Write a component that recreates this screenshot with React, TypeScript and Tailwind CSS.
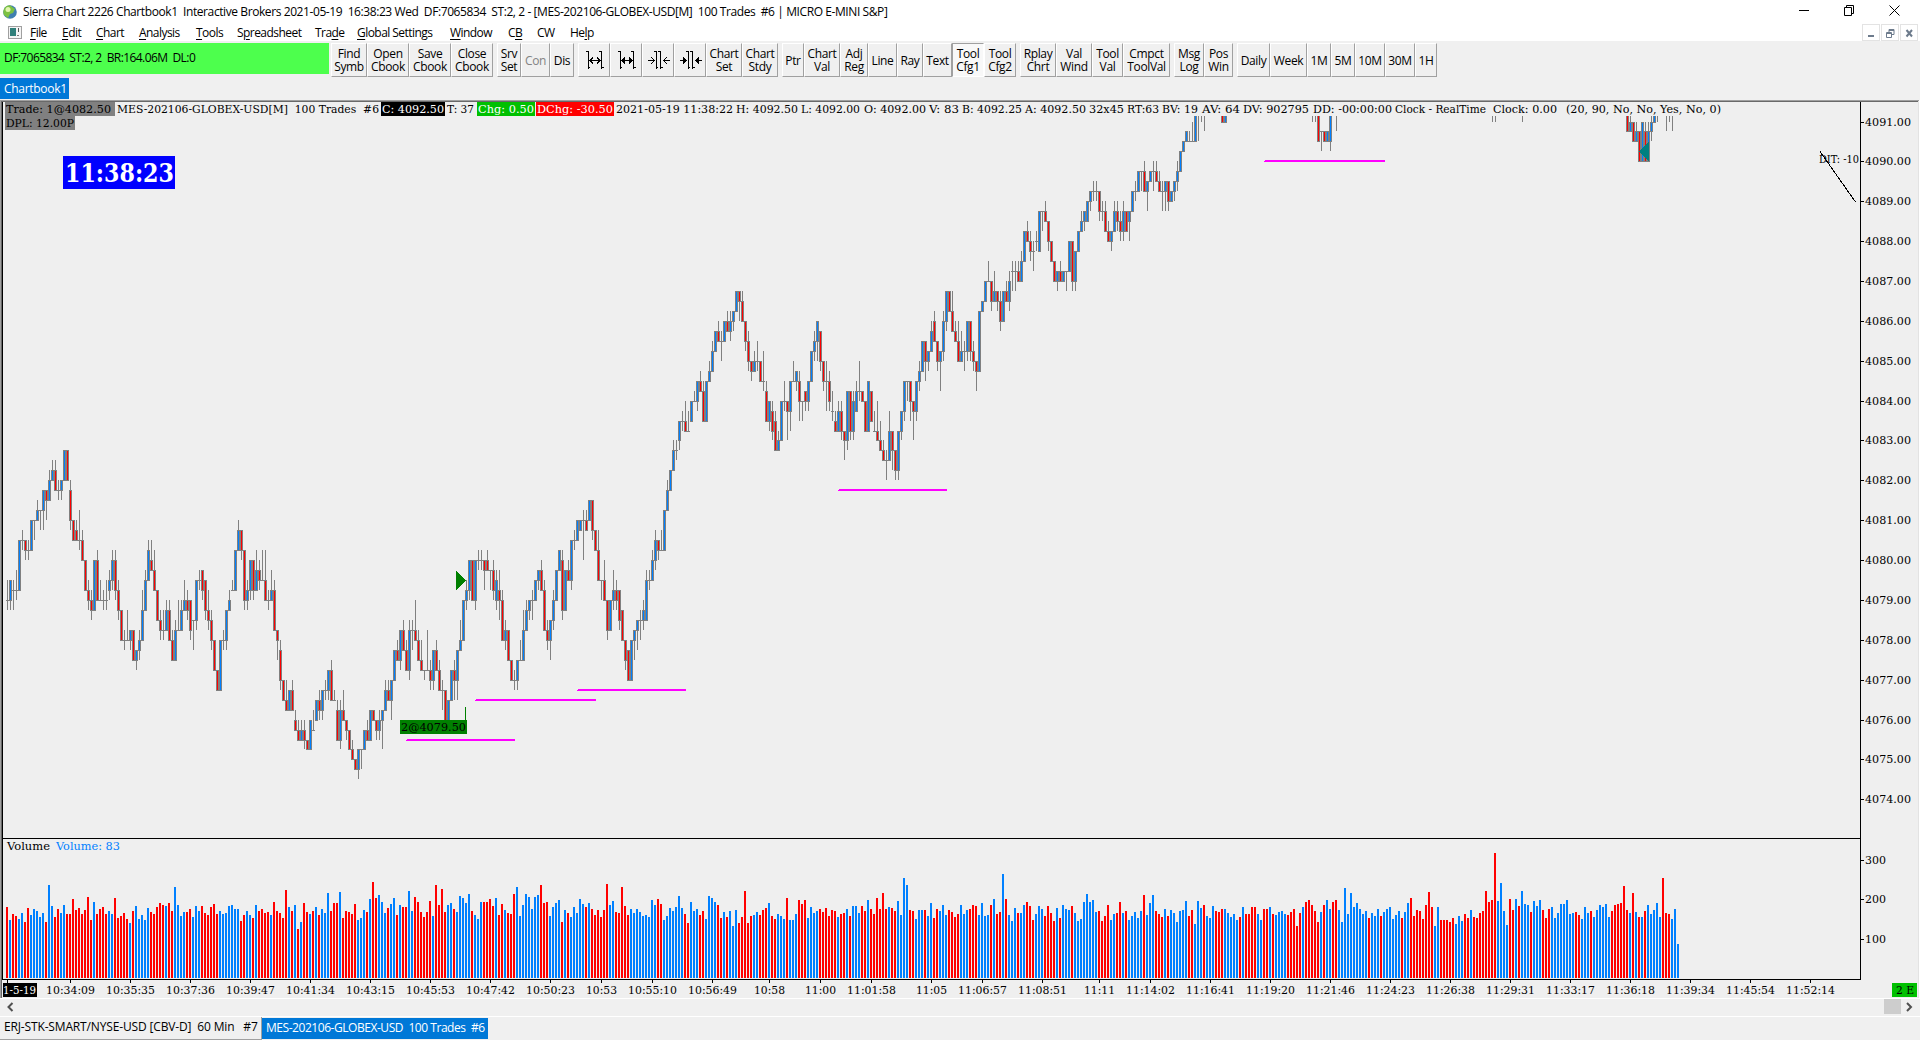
import type { ReactNode } from "react";
import clsx from "clsx";

type Side = "b" | "r";

interface Candle {
  index: number;
  open: number;
  close: number;
  high: number;
  low: number;
}

interface Segment {
  start: number;
  base: number;
  rows: string;
}

interface Label {
  text: string;
  x: number;
  width: number;
}

// Each row is "open close [h<high>] [l<low>]", in quarter-point ticks counted down from the segment's base.
// A row "w<low>" is a bar whose body lies above the visible range.
const segments: Segment[] = [
  {
    start: 0,
    base: 29,
    rows: `15 15 h13 l16|15 13 h13 l16|14 14 h13 l16|14 14 h12 l15|14 9|9 9 h8 l10|9 10 l11|10 10 h9 l11|10 7|7 7 l9
|7 6 h5|6 6 l8|6 4 l8|4 5 l7|5 3 h2|3 2 h1|2 4 h1|4 4 h3 l5|4 3 l5|3 0
|0 3|4 7 h3 l8|7 9|8 9 h7|9 9 h6 l10|9 11 h8|11 14|14 15 h13 l16|15 16 h14 l17|16 11
|11 15 h10|15 15 h13|15 15 h14 l16|15 15 h13 l16|14 13 h12 l15|13 11 h10 l14|11 14 h10 l15|14 16 h13 l17|16 19|19 19 h18 l20
|19 19 h16|19 18 l20|18 21|21 20 l22|20 19 h18 l21|19 16 h14|16 13 h12|13 10 h9|11 12 h9|12 14 h10
|14 17|17 18 h16 l19|18 18 h16 l19|18 16 h15|16 19 h15|19 21 h18|21 18 h17|18 18 h15|18 16 h15|16 15 h13
|15 16 h14 l17|15 18 l19|17 17 l20|17 13 l18|13 13 h12 l14|12 14 l15|13 16 l17|16 17 h14 l18|17 19 h16 l20|19 22
|22 24|24 19|19 19 h18 l20|19 16 l20|16 15 h14|14 14 h13|14 10|10 8 h7|8 10 l11|10 15 l16
|15 14 h13 l16|14 11 l15|11 14 l15|14 12 h10|12 13 h11 l14|13 13 h10|13 15 h10|15 15 h14 l16|15 14 h12|14 18 h13
|18 19 l21|20 23 h19 l24|23 25|25 26 h23|26 24|24 26 h23|27 28 h26|28 29 h27|29 28 h27|28 29 h27 l30
|29 30|30 27|28 28 h26|27 25|25 26 h24 l27|26 24 l27|24 24 h23 l25|24 22 l25|22 25 h21|25 25 h24
|26 29 h25|29 26 h25 l30|26 27 h24|27 28 l29|28 30|30 31 h29|31 32|32 30 l33|30 30 l32|30 28
|28 29 h27|29 26|26 27|27 28 l29|28 27 h26 l29|27 26 l30|26 24 h23|24 25 h23|25 23 l27|23 20
|20 21 h19|21 18 l22|18 20 h17|20 22 h19|22 18 h17 l23|18 18 h17 l20|18 19 h15|19 21 h18|21 22 h19|22 22 l23
|22 22 h18|22 23 h21 l24|23 20 l24|20 22 h19|22 24 h21|24 24 h23 l26|24 27|27 25|25 22|22 23 h21 l25
|23 20 l25|20 19 h17|19 15|15 14 h13 l16|14 11 l15|11 15|15 11 l16|11 11 h10 l12|11 11 h10 l12|11 12 l14
|11 12 h10|12 12 l14|12 14 h11 l15|15 13 h12 l16|14 15 h12 l17|15 19 h14|19 18 h17 l20|18 21|21 23|23 23 h22 l24
|23 21 l24|21 21 h19|21 18 h16|18 16 h15|16 15 l17|15 15 h14 l17|15 13|13 12 l14|12 14 h11|14 18 h13
|18 19 h17 l20|19 17 l21|17 15 h14 l18|15 12|12 10|11 16 h10 l17|16 12|12 13 h11|13 9 l14|9 9 h8 l10
|9 7|8 7|7 7 h6 l11|7 8 h6|7 5|5 8 l9|8 10|10 13 h8|13 13 l15|13 15 h11
|15 18 l19|18 15|15 14 h12 l16|14 15 h13 l16|14 17 l18|16 19|19 21 l22|20 23|23 19|19 18 l21
|18 17 l20|17 17 h16 l19|17 16 h15 l18|17 13 h12|13 13 h12 l14|13 11 h10|11 9 h8 l12|9 10 l11|10 10 h8|10 6
|6 4 h3|4 2`,
  },
  {
    start: 222,
    base: 13,
    rows: `18 16 h15|16 16 h15 l17|15 13 l16|13 13 h12 l14|13 14 h11|14 14 h12|13 11|11 11 h10|11 9 l12|9 10 h8
|10 13 h9|13 9|9 8 h7|8 6 h5|6 4|4 5 h3|5 5 h4 l7|5 3|3 4 h2|4 3 h2 l5
|3 2 l4|2 0|0 1 l3|1 3 h0|3 5 l6|5 7 h4 l8|7 8 l9|8 7 h6|7 7 h5 l8|7 9
|9 9 h6 l10|10 13 h9|13 11 l14|12 14 h11 l15|13 16 h12|16 15 h14|15 11|11 11 h9 l12|11 12 l15|12 9 l14
|9 9 h7|9 8 l10|9 11 h8 l13|11 11 l13|10 11 l12|11 9 l12|9 6|6 5 h4 l7|5 3 l7|4 7 l8
|7 9 l10|9 9 h7 l12|9 11 h8 l12|12 12 h10 l13|13 14 h12|14 12 h11|12 14 h11 l15|14 15 l17|15 10 l16|10 14 l15
|14 11 h10 l15|12 10 h9|10 10 h7 l11|10 11|11 14|14 9|10 13|14 14 h12|14 15 h11|15 16 h13
|16 17 h15|17 17 h16 l19|17 14 h12|14 16 l18|16 18 l19|18 14 l19|14 12 l15|12 9 l13|9 9 l11|9 11 l13
|11 12 l15|12 9 l13|9 8 h7 l10|8 5|5 7 l9|7 6 l8|6 4 h3|3 5 h2|5 7 l8|7 6 l10
|6 3 h2 l7|3 0 l4|0 2|2 4 h0|4 5 h3|5 7 h3|7 6 h4|6 6 h5 l8|6 3 l7|3 6 l7
|6 7 h5 l8|7 8 l10|8 2|2 1`,
  },
  {
    start: 326,
    base: -3,
    rows: `17 15|15 15 h13|15 17 l18|17 16 h14|16 17 l18|17 19 h16 l20|19 16|16 17 h15|17 15 h14 l18|14 14 h13 l16
|14 14 h13 l16|14 15 h13|15 13 h12|13 10|10 11 h9|11 12 h10 l13|12 12 h11 l14|11 11 h10 l12|12 8|8 8 l10
|8 9 h7|9 11 l12|11 13|13 15|15 14 l16|14 15 h13|15 14|14 14 l16|14 11|11 15 l16
|15 12 l16|12 10|10 9 h8|9 8 l10|9 7|7 6 l8|6 6 h5 l7|6 6 h5 l7|6 8 l9|8 8 h7 l9
|8 10 h7|10 11 h9|11 10 l12|10 8 h7|8 9 h7 l10|9 10 h8 l11|10 8 h7 l11|8 10|9 8 l11|8 6
|6 6 h5 l7|6 4|4 4 l6|4 6 h3|6 5 l8|5 4|4 4 h3 l6|4 5 h3|5 6 h4|6 6 h5 l8
|6 5 l8|5 7 l8|7 6|6 5 l7|5 4 h3 l6|4 2|2 1|1 0|1 1 h0|1 1 h-1|1 -3|w1|w-1|w0`,
  },
  { start: 405, base: -3, rows: "-4 -1|-1 -4" },
  { start: 435, base: -3, rows: "w-1|w-1|-4 1|0 0 l2|0 1|1 0|1 -4 l2" },
  { start: 443, base: -3, rows: "w0" },
  { start: 495, base: -3, rows: "w-1|w-1" },
  { start: 505, base: -3, rows: "w-1" },
  { start: 540, base: -3, rows: "-5 0|0 -1 h-4|-1 1|1 0 h-1|0 3|3 -1|0 3 h-1|3 0 h-1|0 -1 h-3 l1|-1 -4|w-1" },
  { start: 553, base: -3, rows: "w0|w-1|w0" },
];

// Side and pixel height of each volume bar.
const volumeRows = `r71 b58 r64 r62 b59 b65 r56 r70 b63 b69 b67 b61 b65 r56 b93 b72 r61 r69 b65 b73
r64 r64 r79 r68 r70 r64 r68 r81 r58 b76 r64 r69 r71 r64 b67 b64 r80 r60 r62 r65
r59 b55 r67 b72 b59 b63 b58 b70 r66 r64 r71 r75 r73 b72 r75 r67 b91 b73 b62 b66
r66 r69 b61 b72 b67 r72 r65 r63 r71 r74 r64 b67 b64 b65 b72 b73 b69 b69 r57 r63
b67 b63 r60 b73 r67 r69 r65 r66 b63 r76 r67 r65 r60 r88 b71 r67 b73 r49 b56 r75
r66 b64 r67 b71 r63 b69 b65 b85 r67 r75 r75 b86 r60 r67 r66 r64 r74 b58 b60 b68
r66 b79 r96 r80 b83 b76 b65 r70 b74 b80 r63 b73 r71 r71 b87 b67 r81 r76 r66 r61
r66 r77 b62 r93 r73 r89 r66 b73 b75 r69 b66 b82 b80 b75 b84 r67 b63 b59 b76 r76
r76 r79 r72 b80 r63 r74 b68 r65 r64 r84 b91 b62 b73 b84 b81 b69 b81 b83 r93 r75
r76 b62 b71 b75 b78 r56 b68 r65 b61 b71 b65 b79 b74 r71 b75 r69 r63 r68 r61 r68
r94 b73 b77 r66 r65 r91 r72 r63 b69 b65 b69 b66 b62 b63 b61 b78 b73 r79 r74 b58
b62 b70 b67 b71 b82 b70 r64 r55 b76 b67 b69 r63 r67 b59 b82 b80 b76 r73 r60 b66
r61 b67 b52 b68 r55 r61 r87 r55 r62 b63 b66 r63 r68 r70 b75 r62 r59 b64 b62 b59
r80 b58 b58 b64 r78 r74 r78 b60 b71 b65 b67 r69 r66 r70 r62 r68 r67 b61 r64 r65
b69 r62 b72 b72 b65 r72 r67 b78 r69 r64 r80 r69 r85 r69 b71 r70 r67 b77 b63 b100
b93 r68 r67 b59 b68 b68 r68 b62 b75 r60 r69 b67 b73 b63 r68 r66 r61 r64 b73 b64
b68 r69 r73 r72 b63 b75 b62 b63 r73 b79 r64 r66 b104 r79 b63 b57 b70 r65 b65 b73
r76 r72 r58 b64 b72 b69 r62 r72 r65 r57 b70 r60 b73 b69 b68 r72 b65 b57 b59 b76
b84 b76 b78 b66 r67 r57 r62 r73 b58 b64 r65 r76 b65 r67 b58 b62 b66 b60 b67 r83
b63 b75 b83 r67 r64 r61 b69 r62 b68 b65 b56 b67 b68 b77 r62 r68 b54 b77 b70 r73
b62 b60 b72 r67 r66 r69 b69 b65 b61 b64 b58 r61 b71 r64 r64 r71 r71 b64 b58 r69
r69 b71 r64 b63 b66 b67 b64 r63 r66 r69 r52 r65 b71 r76 r78 r73 r67 r56 b66 r73
b78 b69 r76 r78 b68 b56 b90 b64 b85 b71 b75 b69 b64 b67 r60 b65 b62 b69 r62 b66
b69 b71 b59 b63 b67 r60 b66 b75 r80 r62 r68 r67 r59 r73 r86 r71 b52 b71 r58 r58
r58 r56 r60 b54 b62 b57 r64 r60 b68 r61 r60 r65 r67 r87 r76 r78 r125 b77 b95 b67
b53 r79 r68 b79 r72 b87 b74 b73 r66 b77 b72 b78 r68 r60 r69 b71 b60 b65 b74 b74
b78 b64 b65 r66 r63 b59 b71 b65 r67 b61 b68 b73 b71 b74 b61 r67 r73 r74 r75 r92
r68 b65 r85 b66 r61 b61 r67 b73 b64 b68 b75 b61 r100 r65 r64 b59 b69 b34`;

const CHART_TOP = 102;
const PLOT_TOP = 116;
const OFFSCREEN_TICK = -8;

const barX = (index: number) => 7 + index * 3;
// Tick 0 is 4090.00.
const tickY = (tick: number) => 161 + Math.floor(0.875 + 9.968 * tick);

function parseSegment({ start, base, rows }: Segment): Candle[] {
  return rows.split("|").map((row, offset) => {
    const parts = row.trim().split(" ");
    const index = start + offset;
    if (parts[0].startsWith("w")) {
      return { index, open: OFFSCREEN_TICK, close: OFFSCREEN_TICK, high: OFFSCREEN_TICK, low: base + Number(parts[0].slice(1)) };
    }
    const open = base + Number(parts[0]);
    const close = base + Number(parts[1]);
    const high = parts.find((part) => part.startsWith("h"));
    const low = parts.find((part) => part.startsWith("l"));
    return {
      index,
      open,
      close,
      high: high ? base + Number(high.slice(1)) : Math.min(open, close),
      low: low ? base + Number(low.slice(1)) : Math.max(open, close),
    };
  });
}

const candles = segments.flatMap(parseSegment);
const volumes = volumeRows.split(/\s+/).map((item) => ({ side: item[0] as Side, height: Number(item.slice(1)) }));

const headerLabels: Label[] = [
  { text: "MES-202106-GLOBEX-USD[M]  100 Trades  #6", x: 117, width: 262 },
  { text: "T: 37", x: 447, width: 27 },
  { text: "2021-05-19 11:38:22", x: 616, width: 117 },
  { text: "H: 4092.50", x: 736, width: 62 },
  { text: "L: 4092.00", x: 801, width: 59 },
  { text: "O: 4092.00", x: 864, width: 62 },
  { text: "V: 83", x: 929, width: 30 },
  { text: "B: 4092.25", x: 962, width: 60 },
  { text: "A: 4092.50", x: 1025, width: 61 },
  { text: "32x45", x: 1089, width: 35 },
  { text: "RT:63", x: 1127, width: 32 },
  { text: "BV: 19", x: 1162, width: 36 },
  { text: "AV: 64", x: 1202, width: 38 },
  { text: "DV: 902795", x: 1243, width: 66 },
  { text: "DD: -00:00:00", x: 1313, width: 79 },
  { text: "Clock - RealTime", x: 1395, width: 91 },
  { text: "Clock: 0.00", x: 1493, width: 64 },
  { text: "(20, 90, No, No, Yes, No, 0)", x: 1566, width: 155 },
];

const timeLabels: [number, string][] = [
  [70, "10:34:09"],
  [130, "10:35:35"],
  [190, "10:37:36"],
  [250, "10:39:47"],
  [310, "10:41:34"],
  [370, "10:43:15"],
  [430, "10:45:53"],
  [490, "10:47:42"],
  [550, "10:50:23"],
  [601, "10:53"],
  [652, "10:55:10"],
  [712, "10:56:49"],
  [769, "10:58"],
  [820, "11:00"],
  [871, "11:01:58"],
  [931, "11:05"],
  [982, "11:06:57"],
  [1042, "11:08:51"],
  [1099, "11:11"],
  [1150, "11:14:02"],
  [1210, "11:16:41"],
  [1270, "11:19:20"],
  [1330, "11:21:46"],
  [1390, "11:24:23"],
  [1450, "11:26:38"],
  [1510, "11:29:31"],
  [1570, "11:33:17"],
  [1630, "11:36:18"],
  [1690, "11:39:34"],
  [1750, "11:45:54"],
  [1810, "11:52:14"],
];

const prices = Array.from({ length: 18 }, (_, i) => 4091 - i);
const supportLines = [
  { x: 406, y: 739, width: 109 },
  { x: 475, y: 699, width: 121 },
  { x: 577, y: 689, width: 109 },
  { x: 838, y: 489, width: 109 },
  { x: 1264, y: 160, width: 121 },
];

const menus: [string, string, string][] = [
  ["", "F", "ile"],
  ["", "E", "dit"],
  ["", "C", "hart"],
  ["", "A", "nalysis"],
  ["", "T", "ools"],
  ["S", "p", "readsheet"],
  ["Tra", "d", "e"],
  ["", "G", "lobal Settings"],
  ["", "W", "indow"],
  ["C", "B", ""],
  ["CW", "", ""],
  ["He", "l", "p"],
];
const menuWidths = ["w-8", "w-[34px]", "w-[43px]", "w-[57px]", "w-[41px]", "w-[78px]", "w-[42px]", "w-[93px]", "w-[58px]", "w-[29px]", "w-[33px]", "w-[30px]"];

function ChartText({ text, x, y, width, fill = "#000", bold = false, size = 11 }: Label & { y: number; fill?: string; bold?: boolean; size?: number }) {
  return (
    <text
      x={x}
      y={y}
      fill={fill}
      fontSize={size}
      fontWeight={bold ? 700 : 400}
      textLength={width}
      lengthAdjust="spacingAndGlyphs"
      className="whitespace-pre font-['DejaVu_Serif','Liberation_Serif',serif]"
    >
      {text}
    </text>
  );
}

function Candles() {
  return (
    <g clipPath="url(#plot)" shapeRendering="crispEdges">
      {candles.map(({ index, open, close, high, low }) => {
        const x = barX(index);
        const top = tickY(Math.min(open, close));
        const bottom = tickY(Math.max(open, close));
        const wickTop = tickY(high);
        return (
          <g key={index}>
            <rect x={x} y={wickTop} width={1} height={Math.max(tickY(low) - wickTop, 1)} fill="#808080" />
            <rect x={x - 1} y={top} width={3} height={bottom - top + 1} fill="#808080" />
            {bottom > top && <rect x={x} y={top + 1} width={1} height={bottom - top - 1} fill={close < open ? "#0080ff" : "#ff0000"} />}
          </g>
        );
      })}
    </g>
  );
}

function Chart() {
  return (
    <svg width={1920} height={898} viewBox="0 100 1920 898" className="block">
      <clipPath id="plot">
        <rect x={3} y={PLOT_TOP} width={1857} height={720} />
      </clipPath>
      <g shapeRendering="crispEdges">
        <rect x={0} y={100} width={1920} height={898} fill="#efefef" />
        <rect x={0} y={100} width={1920} height={1} fill="#a0a0a0" />
        <rect x={0} y={101} width={1920} height={1} fill="#696969" />
        <rect x={0} y={100} width={1} height={898} fill="#a0a0a0" />
        <rect x={1} y={101} width={1} height={897} fill="#696969" />
        <rect x={2} y={CHART_TOP} width={1} height={878} fill="#000" />
        <rect x={1860} y={CHART_TOP} width={1} height={878} fill="#000" />
        <rect x={2} y={838} width={1859} height={1} fill="#000" />
        <rect x={2} y={979} width={1859} height={1} fill="#000" />
        <rect x={1918} y={101} width={1} height={897} fill="#e3e3e3" />
        <rect x={1919} y={100} width={1} height={898} fill="#fff" />
      </g>

      <Candles />

      <g shapeRendering="crispEdges">
        {volumes.map(({ side, height }, index) => (
          <rect key={index} x={barX(index) - 1} y={978 - height} width={2} height={height} fill={side === "b" ? "#0080ff" : "#ff0000"} />
        ))}
        {supportLines.map(({ x, y, width }) => (
          <g key={x} fill="#ff00ff">
            <rect x={x + 1} y={y} width={width - 1} height={1} />
            <rect x={x} y={y + 1} width={width} height={1} />
          </g>
        ))}
      </g>

      <path d="M456 571V590L466.500 580.500Z" fill="#008000" shapeRendering="crispEdges" />
      <path d="M1649 142V162L1639 151.500Z" fill="#008080" shapeRendering="crispEdges" />
      <rect x={465} y={707} width={1} height={14} fill="#008000" />
      <rect x={400} y={720} width={67} height={14} fill="#008000" />
      <ChartText text="2@4079.50" x={401} y={731} width={65} />

      <rect x={5} y={102} width={110} height={14} fill="#808080" />
      <rect x={5} y={116} width={70} height={14} fill="#808080" />
      <rect x={381} y={102} width={64} height={14} fill="#000" />
      <rect x={477} y={102} width={58} height={14} fill="#00c000" />
      <rect x={536} y={102} width={78} height={14} fill="#f00" />
      <ChartText text="Trade: 1@4082.50" x={6} y={113} width={105} />
      <ChartText text="DPL: 12.00P" x={6} y={127} width={68} />
      <ChartText text="C: 4092.50" x={382} y={113} width={62} fill="#fff" />
      <ChartText text="Chg: 0.50" x={478} y={113} width={56} fill="#fff" />
      <ChartText text="DChg: -30.50" x={537} y={113} width={76} fill="#fff" />
      {headerLabels.map((label) => (
        <ChartText key={label.text} {...label} y={113} />
      ))}

      <rect x={63} y={156} width={112} height={33} fill="#00f" />
      <ChartText text="11:38:23" x={65} y={182} width={109} fill="#fff" size={26} bold />

      <ChartText text="DIT: -10" x={1819} y={163} width={40} />
      <path d="M1820 151.500L1855.500 202" stroke="#000" fill="none" shapeRendering="crispEdges" />

      {prices.map((price) => {
        const y = tickY((4090 - price) * 4);
        return (
          <g key={price}>
            <rect x={1861} y={y} width={3} height={1} fill="#000" />
            <ChartText text={price.toFixed(2)} x={1865} y={y + 4} width={46} />
          </g>
        );
      })}
      {[300, 200, 100].map((level, i) => (
        <g key={level}>
          <rect x={1861} y={[860, 899, 939][i]} width={3} height={1} fill="#000" />
          <ChartText text={String(level)} x={1865} y={[864, 903, 943][i]} width={21} />
        </g>
      ))}

      <ChartText text="Volume" x={7} y={850} width={43} />
      <ChartText text="Volume: 83" x={56} y={850} width={64} fill="#0080ff" />

      <rect x={7} y={980} width={1} height={3} fill="#000" />
      <rect x={3} y={983} width={34} height={14} fill="#000" />
      <ChartText text="1-5-19" x={3} y={994} width={33} fill="#fff" />
      {timeLabels.map(([x, text]) => {
        const width = text.length === 5 ? 31 : 49;
        return (
          <g key={x}>
            <rect x={x} y={980} width={1} height={3} fill="#000" />
            <ChartText text={text} x={x - (width - 1) / 2} y={994} width={width} />
          </g>
        );
      })}
      <rect x={1892} y={983} width={25} height={14} fill="#00c000" />
      <ChartText text="2 E" x={1896} y={994} width={18} />
    </svg>
  );
}

function ToolButton({ width, active = false, disabled = false, children }: { width: string; active?: boolean; disabled?: boolean; children: ReactNode }) {
  return (
    <button
      type="button"
      className={clsx(
        "flex h-[34px] shrink-0 items-center justify-center whitespace-pre border text-center text-[12px] leading-[13px] tracking-[-0.35px]",
        active ? "border-b-white border-l-[#a0a0a0] border-r-white border-t-[#a0a0a0] bg-[#f8f8f8]" : "border-b-[#a0a0a0] border-l-white border-r-[#a0a0a0] border-t-white",
        disabled && "text-[#838383]",
        width
      )}
    >
      {children}
    </button>
  );
}

function SpacingIcon({ inward = false, bold = false }: { inward?: boolean; bold?: boolean }) {
  const left = inward ? 8 : 4;
  const right = inward ? 13 : 18;
  return (
    <svg width={22} height={20} viewBox="0 0 22 20" fill="none" stroke="#000" shapeRendering="crispEdges" className="ml-px">
      <path d={`M${left + 0.5} 1V19M${left - 2} 1.500H${left}M${left + 1} 17.500H${left + 2}M${right - 0.5} 1V19M${right - 3} 1.500H${right - 1}M${right} 17.500H${right + 2}`} />
      {inward ? (
        <g>
          <path d="M0 10.500H6M16 10.500H22" />
          <path d="M3 7L6.500 10.500L3 14M19 7L15.500 10.500L19 14" fill={bold ? "#000" : "none"} />
        </g>
      ) : (
        <g>
          <path d="M6 10.500H16" />
          <path d="M9 7.500L6 10.500L9 13.500M13 7.500L16 10.500L13 13.500" fill={bold ? "#000" : "none"} />
        </g>
      )}
    </svg>
  );
}

function Toolbar() {
  return (
    <div className="flex h-9 items-start bg-[#f0f0f0] pt-[2px]">
      <div className="mr-[2px] flex h-[31px] w-[329px] items-center whitespace-pre bg-[#4dff4d] pb-px pl-1 text-[12px] tracking-[-0.58px]">DF:7065834  ST:2, 2  BR:164.06M  DL:0</div>
      <ToolButton width="w-9">{"Find\nSymb"}</ToolButton>
      <ToolButton width="w-[42px]">{"Open\nCbook"}</ToolButton>
      <ToolButton width="w-[42px]">{"Save\nCbook"}</ToolButton>
      <ToolButton width="w-[42px]">{"Close\nCbook"}</ToolButton>
      <div className="ml-1 flex">
        <ToolButton width="w-6">{"Srv\nSet"}</ToolButton>
        <ToolButton width="w-[29px]" disabled>Con</ToolButton>
        <ToolButton width="w-6">Dis</ToolButton>
      </div>
      <div className="ml-1 flex">
        <ToolButton width="w-8"><SpacingIcon /></ToolButton>
        <ToolButton width="w-8"><SpacingIcon bold /></ToolButton>
        <ToolButton width="w-8"><SpacingIcon inward /></ToolButton>
        <ToolButton width="w-8"><SpacingIcon inward bold /></ToolButton>
        <ToolButton width="w-9">{"Chart\nSet"}</ToolButton>
        <ToolButton width="w-9">{"Chart\nStdy"}</ToolButton>
      </div>
      <div className="ml-1 flex">
        <ToolButton width="w-[22px]">Ptr</ToolButton>
        <ToolButton width="w-9">{"Chart\nVal"}</ToolButton>
        <ToolButton width="w-7">{"Adj\nReg"}</ToolButton>
        <ToolButton width="w-[29px]">Line</ToolButton>
        <ToolButton width="w-[26px]">Ray</ToolButton>
        <ToolButton width="w-[29px]">Text</ToolButton>
        <ToolButton width="w-8" active>{"Tool\nCfg1"}</ToolButton>
        <ToolButton width="w-8">{"Tool\nCfg2"}</ToolButton>
      </div>
      <div className="ml-1 flex">
        <ToolButton width="w-9">{"Rplay\nChrt"}</ToolButton>
        <ToolButton width="w-9">{"Val\nWind"}</ToolButton>
        <ToolButton width="w-[31px]">{"Tool\nVal"}</ToolButton>
        <ToolButton width="w-[47px]">{"Cmpct\nToolVal"}</ToolButton>
      </div>
      <div className="ml-1 flex">
        <ToolButton width="w-[30px]">{"Msg\nLog"}</ToolButton>
        <ToolButton width="w-[29px]">{"Pos\nWin"}</ToolButton>
      </div>
      <div className="ml-1 flex">
        <ToolButton width="w-[33px]">Daily</ToolButton>
        <ToolButton width="w-[37px]">Week</ToolButton>
        <ToolButton width="w-6">1M</ToolButton>
        <ToolButton width="w-6">5M</ToolButton>
        <ToolButton width="w-[30px]">10M</ToolButton>
        <ToolButton width="w-[30px]">30M</ToolButton>
        <ToolButton width="w-[22px]">1H</ToolButton>
      </div>
    </div>
  );
}

function TitleBar() {
  return (
    <div className="flex h-6 items-center bg-white pl-[3px]">
      <svg width={14} height={14} viewBox="0 0 14 14">
        <circle cx={7} cy={7} r={6.800} fill="#3f7fb0" />
        <path d="M7 .2A6.800 6.800 0 0 0 1 10L5 13 7 9 10 8 12 4Z" fill="#7cc142" />
        <circle cx={5} cy={4.500} r={2.500} fill="#e2f5b0" />
      </svg>
      <div className="ml-[6px] whitespace-pre text-[12px] tracking-[-0.41px]">Sierra Chart 2226 Chartbook1  Interactive Brokers 2021-05-19  16:38:23 Wed  DF:7065834  ST:2, 2 - [MES-202106-GLOBEX-USD[M]  100 Trades  #6 | MICRO E-MINI S&amp;P]</div>
      <svg width={102} height={12} viewBox="0 0 102 12" fill="none" stroke="#000" className="mr-[19px] mb-1 ml-auto">
        <path d="M0 6.500H10M45.500 3.500H52.500V11.500H45.500ZM47.500 3V1.500H54.500V9.500H53M90.500 1.500L100.500 11.500M100.500 1.500L90.500 11.500" />
      </svg>
    </div>
  );
}

function MdiButton({ children }: { children: ReactNode }) {
  return (
    <div className="flex h-[17px] w-[18px] items-center justify-center border border-[#e3e3e3]">
      <svg width={10} height={10} viewBox="0 0 10 10" fill="none" stroke="#6d7b8c">
        {children}
      </svg>
    </div>
  );
}

function MenuBar() {
  return (
    <div className="flex h-[17px] items-center bg-white pl-2">
      <svg width={14} height={13} viewBox="0 0 14 13" className="mr-2 shrink-0" shapeRendering="crispEdges">
        <rect x={0.500} y={0.500} width={13} height={12} fill="#f4f4f4" stroke="#a0a0a0" />
        <rect x={2} y={2} width={6} height={8} fill="#2f7f7a" />
        <rect x={10} y={2} width={1} height={4} fill="#555" />
        <rect x={9} y={9} width={2} height={1} fill="#777" />
      </svg>
      {menus.map(([before, key, after], i) => (
        <div key={before + key + after} className={clsx("shrink-0 whitespace-pre text-[12px] tracking-[-0.55px]", menuWidths[i])}>
          {before}
          <span className="underline underline-offset-2">{key}</span>
          {after}
        </div>
      ))}
      <div className="mr-[2px] ml-auto flex gap-px">
        <MdiButton>
          <path d="M2 8H8" strokeWidth={2} />
        </MdiButton>
        <MdiButton>
          <path d="M1.500 4.500H6.500V9.500H1.500ZM1 5.500H7M4 4V1.500H9V6.500H7M4 2.500H9" />
        </MdiButton>
        <MdiButton>
          <path d="M2.500 2L8 8.500M8 2L2.500 8.500" strokeWidth={2} />
        </MdiButton>
      </div>
    </div>
  );
}

export default function App() {
  return (
    <div className="flex h-[1040px] w-[1920px] flex-col overflow-hidden bg-[#f0f0f0] font-['Open_Sans','Noto_Sans',sans-serif] text-black">
      <TitleBar />
      <MenuBar />
      <Toolbar />
      <div className="flex h-[23px] items-start pt-px">
        <div className="flex h-[21px] w-[69px] items-center bg-[#0078d7] pl-1 text-[12px] tracking-[-0.3px] text-white">Chartbook1</div>
      </div>
      <Chart />
      <div className="flex h-[19px] items-start border-t border-b border-t-white border-b-white">
        <svg width={18} height={16} viewBox="0 0 18 16" fill="none" stroke="#505050" strokeWidth={2}>
          <path d="M12.500 4L8.500 8L12.500 12" />
        </svg>
        <div className="ml-[1866px] h-[15px] w-[17px] shrink-0 bg-[#cdcdcd]" />
        <svg width={16} height={16} viewBox="0 0 16 16" fill="none" stroke="#505050" strokeWidth={2} className="shrink-0">
          <path d="M6 4L10 8L6 12" />
        </svg>
      </div>
      <div className="flex h-[23px] items-start text-[12px] whitespace-pre">
        <div className="flex h-[23px] w-[262px] items-center border-r border-b border-[#a0a0a0] pb-[2px] pl-1 tracking-[-0.15px]">ERJ-STK-SMART/NYSE-USD [CBV-D]  60 Min   #7</div>
        <div className="mt-px flex h-[21px] w-[226px] items-center bg-[#0078d7] pb-px pl-1 tracking-[-0.45px] text-white">MES-202106-GLOBEX-USD  100 Trades  #6</div>
      </div>
    </div>
  );
}
